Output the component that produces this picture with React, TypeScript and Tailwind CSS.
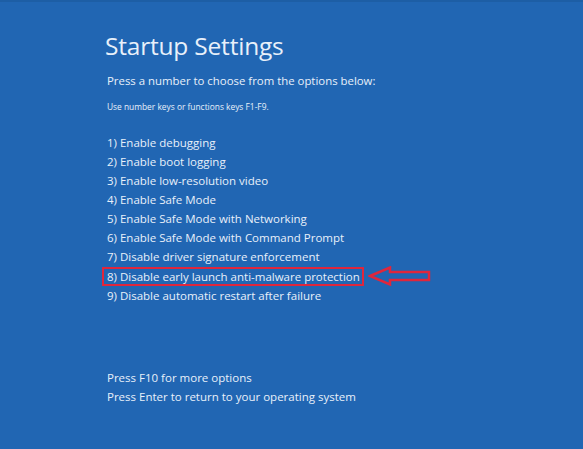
import React from 'react';

const options = [
  '1) Enable debugging',
  '2) Enable boot logging',
  '3) Enable low-resolution video',
  '4) Enable Safe Mode',
  '5) Enable Safe Mode with Networking',
  '6) Enable Safe Mode with Command Prompt',
  '7) Disable driver signature enforcement',
  '8) Disable early launch anti-malware protection',
  '9) Disable automatic restart after failure',
];

const Arrow = () => (
  <svg width="64" height="20" viewBox="0 0 64 20" className="ml-[4px]">
    <path
      d="M2 10 L22 1.5 L22 6 L61 6 L61 14 L22 14 L22 18.5 Z"
      fill="none"
      stroke="#e0263c"
      strokeWidth="2.5"
      strokeLinejoin="miter"
    />
  </svg>
);

const App: React.FC = () => {
  return (
    <div
      className="w-[583px] h-[449px] bg-[#2166b3] border-t-2 border-[#1d5ea5] text-[#e8f0fa] overflow-hidden"
      style={{ fontFamily: '"Open Sans", "Noto Sans", sans-serif' }}>
      <div className="pl-[105px] pt-[28px] flex flex-col">
        <h1 className="text-[24.5px] leading-[32px] tracking-[-0.2px]">Startup Settings</h1>
        <p className="mt-[11px] text-[11.4px] leading-[16px] pl-[2px]">Press a number to choose from the options below:</p>
        <p className="mt-[13px] text-[8.4px] leading-[10px] pl-[2px]">Use number keys or functions keys F1-F9.</p>
        <ul className="mt-[21px] flex flex-col text-[11.5px] leading-[19px]">
          {options.map((o, i) =>
            i === 7 ? (
              <li key={o} className="flex items-center -ml-[3px]">
                <span className="border-2 border-[#e0263c] pl-[3px] pr-[2px] leading-[15px]">{o}</span>
                <Arrow />
              </li>
            ) : (
              <li key={o} className="pl-[2px]">{o}</li>
            )
          )}
        </ul>
        <div className="mt-[63px] flex flex-col text-[11.5px] leading-[19px] pl-[2px]">
          <span>Press F10 for more options</span>
          <span>Press Enter to return to your operating system</span>
        </div>
      </div>
    </div>
  );
};

export default App;
